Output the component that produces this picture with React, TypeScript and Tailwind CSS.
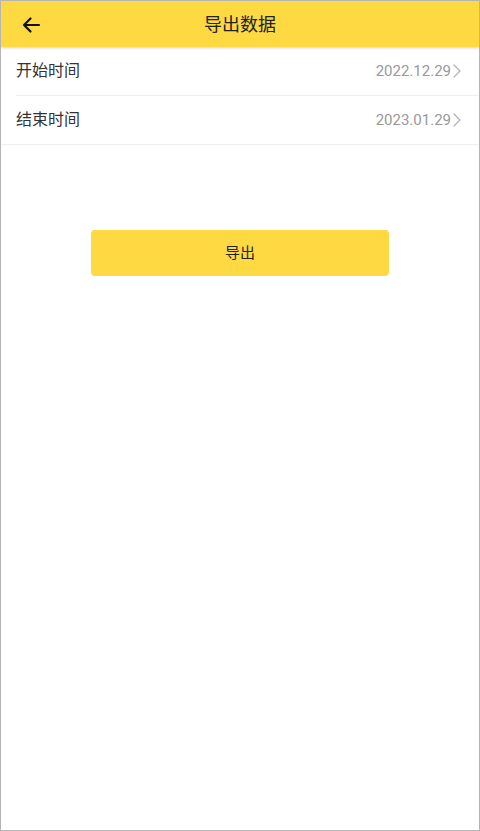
import React from 'react';

// Export data page: header, two date rows and an export button
const rows = [
  { label: '开始时间', value: '2022.12.29', inset: true },
  { label: '结束时间', value: '2023.01.29', inset: false },
];

const Chevron = () => (
  <svg width="8" height="14" viewBox="0 0 8 14" fill="none" className="ml-[2px]">
    <path d="M1 1l6 6-6 6" stroke="#b3b3b3" strokeWidth="1.3" strokeLinecap="round" strokeLinejoin="round" />
  </svg>
);

export default function App() {
  return (
    <div
      className="w-[480px] h-[831px] bg-white border border-[#b4b4b4] flex flex-col overflow-hidden"
      style={{ fontFamily: 'Roboto, "Noto Sans CJK SC", sans-serif' }}
    >
      {/* Header */}
      <div className="relative h-[46px] bg-[#fed942] flex items-center justify-center shadow-[0_1px_3px_rgba(0,0,0,0.18)] z-10">
        <button className="absolute left-[20px] top-[14px]">
          <svg width="20" height="20" viewBox="0 0 20 20" fill="none">
            <path d="M18 10H3M9.5 3.5L3 10l6.5 6.5" stroke="#111" strokeWidth="2.2" strokeLinecap="round" strokeLinejoin="round" />
          </svg>
        </button>
        <span className="text-[18px] text-[#222]">导出数据</span>
      </div>

      {/* Rows */}
      <div className="flex flex-col">
        {rows.map((row) => (
          <div key={row.label} className={row.inset ? 'pl-[15px]' : ''}>
            <div
              className={`h-[49px] flex items-center justify-between pr-[18px] border-b border-[#efefef] ${row.inset ? '' : 'pl-[15px]'}`}
            >
              <span className="text-[16px] text-[#333]">{row.label}</span>
              <div className="flex items-center">
                <span className="text-[15px] text-[#999]">{row.value}</span>
                <Chevron />
              </div>
            </div>
          </div>
        ))}
      </div>

      {/* Export button */}
      <div className="flex justify-center mt-[85px]">
        <button className="w-[298px] h-[46px] rounded-[4px] bg-[#fed942] text-[15px] text-[#222]">
          导出
        </button>
      </div>
    </div>
  );
}
